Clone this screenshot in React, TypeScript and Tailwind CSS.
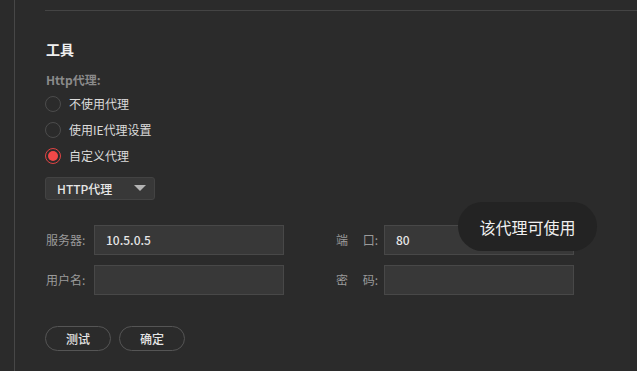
import React from "react";

const font = { fontFamily: '"Noto Sans CJK SC", "Liberation Sans", sans-serif' };

function Radio({ label, checked }: { label: string; checked?: boolean }) {
  return (
    <div className="flex items-center h-[26px] gap-[8px]">
      {checked ? (
        <span className="w-[16px] h-[16px] rounded-full border border-[#e04444] flex items-center justify-center">
          <span className="w-[10px] h-[10px] rounded-full bg-[#f04848]" />
        </span>
      ) : (
        <span className="w-[16px] h-[16px] rounded-full border border-[#4c4c4c]" />
      )}
      <span className="text-[12px] text-[#dcdcdc]">{label}</span>
    </div>
  );
}

function Field({ label, value, split }: { label: string; value?: string; split?: boolean }) {
  return (
    <div className="flex items-center">
      <div className="w-[49px] text-[12px] text-[#9a9a9a] pl-[1px]">
        {split ? (
          <div className="flex justify-between w-[42px]">
            <span>{label[0]}</span>
            <span>{label.slice(1)}</span>
          </div>
        ) : (
          label
        )}
      </div>
      <div className="w-[190px] h-[30px] bg-[#383838] border border-[#484848] flex items-center px-[11px] text-[12px] font-medium text-[#e6e6e6]">
        {value}
      </div>
    </div>
  );
}

export default function App() {
  return (
    <div className="relative w-[637px] h-[371px] bg-[#2b2b2b] overflow-hidden" style={font}>
      <div className="ml-[14px] h-full border-l border-[#474747] pl-[30px] pt-[10px]">
        <div className="border-t border-[#444444]" />
        <div className="pl-[1px]">
          <h2 className="mt-[28px] text-[14px] font-bold text-[#f0f0f0] leading-[20px]">工具</h2>
          <div className="mt-[13px] text-[12px] font-bold text-[#8a8a8a] leading-[16px]">Http代理:</div>
          <div className="mt-[3px] -ml-[1px]">
            <Radio label="不使用代理" />
            <Radio label="使用IE代理设置" />
            <Radio label="自定义代理" checked />
          </div>
          <div className="mt-[8px] -ml-[1px] w-[110px] h-[23px] rounded-[3px] bg-[#383838] border border-[#434343] flex items-center justify-between pl-[11px] pr-[8px]">
            <span className="text-[12px] font-medium text-[#e6e6e6]">HTTP代理</span>
            <svg width="12" height="7" viewBox="0 0 12 7">
              <path d="M0 0 L12 0 L6 6 Z" fill="#b4b4b4" />
            </svg>
          </div>
          <div className="mt-[25px] grid grid-cols-[240px_240px] gap-x-[50px] gap-y-[10px] -ml-[1px]">
            <Field label="服务器:" value="10.5.0.5" />
            <Field label="端口:" value="80" split />
            <Field label="用户名:" />
            <Field label="密码:" split />
          </div>
          <div className="mt-[31px] flex gap-[8px] -ml-[1px]">
            <button className="w-[66px] h-[25px] rounded-full border border-[#555555] text-[12px] font-medium text-[#e6e6e6]">测试</button>
            <button className="w-[66px] h-[25px] rounded-full border border-[#555555] text-[12px] font-medium text-[#e6e6e6]">确定</button>
          </div>
        </div>
      </div>
      <div className="absolute left-[458px] top-[202px] w-[139px] h-[49px] rounded-full bg-[#232323] flex items-center justify-center text-[16px] text-[#f0f0f0]">
        该代理可使用
      </div>
    </div>
  );
}
